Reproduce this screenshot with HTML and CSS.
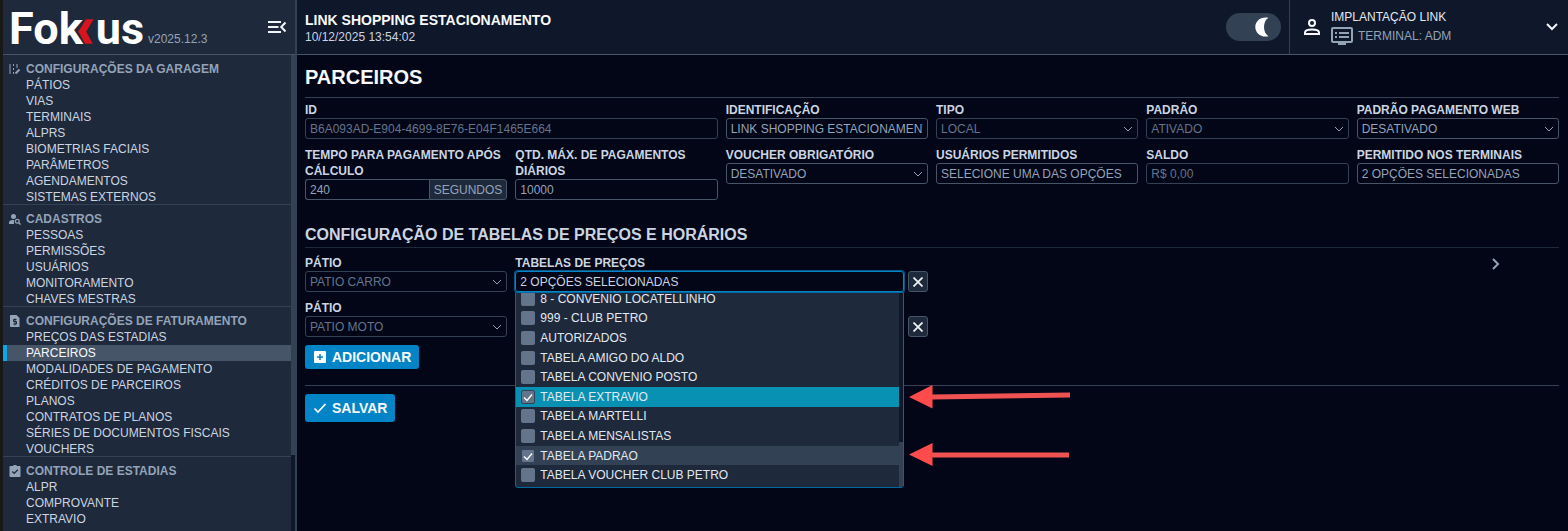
FILE: index.html
```html
<!DOCTYPE html>
<html lang="pt-BR">

<head>
    <meta charset="UTF-8">
    <meta name="viewport" content="width=device-width, initial-scale=1.0">
    <title>Fokkus - Parceiros</title>
    <link rel="stylesheet" href="styles.css">
</head>

<body>
    <aside class="sidebar">
        <div class="brand">
            <a class="logo" href="#" aria-label="Fokkus"><span>Fok</span><svg width="17" height="25" viewBox="0 0 17 25"><path d="M9 0H17L9.500 12.500L16 25H8L1 12.500Z" fill="#d9141e" stroke="#1e293b" stroke-width=".5"/></svg><span>us</span></a>
            <span class="version">v2025.12.3</span>
            <button class="icon-btn collapse" aria-label="Recolher menu">
                <svg width="20" height="14" viewBox="0 0 20 14" fill="none" stroke="#f1f5f9" stroke-width="2"><path d="M1 2H14M1 7H11.500M1 12H14M18.500 2.500L14.200 7L18.500 11.500"/></svg>
            </button>
        </div>
        <div class="menu-wrap">
            <nav class="menu">
                <section class="group">
                    <h3>
                        <svg width="12" height="12" viewBox="0 0 12 12" fill="none" stroke="#94a3b8"><path d="M1 1V11M4.500 1V3M4.500 5V7M4.500 9V11M8 1V5"/><path d="M6.500 10.500L10.500 6.500" stroke-width="2"/></svg>
                        CONFIGURAÇÕES DA GARAGEM
                    </h3>
                    <ul>
                        <li><a href="#">PÁTIOS</a></li>
                        <li><a href="#">VIAS</a></li>
                        <li><a href="#">TERMINAIS</a></li>
                        <li><a href="#">ALPRS</a></li>
                        <li><a href="#">BIOMETRIAS FACIAIS</a></li>
                        <li><a href="#">PARÂMETROS</a></li>
                        <li><a href="#">AGENDAMENTOS</a></li>
                        <li><a href="#">SISTEMAS EXTERNOS</a></li>
                    </ul>
                </section>
                <section class="group">
                    <h3>
                        <svg width="12" height="12" viewBox="0 0 12 12" fill="#94a3b8"><circle cx="4.500" cy="3.500" r="2.500"/><path d="M0 11V9.500C0 7.500 2.500 7 5 7V11Z"/><circle cx="8.300" cy="8.200" r="1.900" fill="none" stroke="#94a3b8" stroke-width="1.200"/><path d="M9.600 9.600L11.600 11.600" stroke="#94a3b8" stroke-width="1.300"/></svg>
                        CADASTROS
                    </h3>
                    <ul>
                        <li><a href="#">PESSOAS</a></li>
                        <li><a href="#">PERMISSÕES</a></li>
                        <li><a href="#">USUÁRIOS</a></li>
                        <li><a href="#">MONITORAMENTO</a></li>
                        <li><a href="#">CHAVES MESTRAS</a></li>
                    </ul>
                </section>
                <section class="group">
                    <h3>
                        <svg width="12" height="12" viewBox="0 0 12 12"><path d="M2 0H7.500L10.500 3V12H2C1.400 12 1 11.600 1 11V1C1 .4 1.400 0 2 0Z" fill="#94a3b8"/><path d="M7.500 4.500H4.500V6.500H7.500V9H4.300M6 3.500V10.300" fill="none" stroke="#1e293b"/></svg>
                        CONFIGURAÇÕES DE FATURAMENTO
                    </h3>
                    <ul>
                        <li><a href="#">PREÇOS DAS ESTADIAS</a></li>
                        <li><a class="active" href="#">PARCEIROS</a></li>
                        <li><a href="#">MODALIDADES DE PAGAMENTO</a></li>
                        <li><a href="#">CRÉDITOS DE PARCEIROS</a></li>
                        <li><a href="#">PLANOS</a></li>
                        <li><a href="#">CONTRATOS DE PLANOS</a></li>
                        <li><a href="#">SÉRIES DE DOCUMENTOS FISCAIS</a></li>
                        <li><a href="#">VOUCHERS</a></li>
                    </ul>
                </section>
                <section class="group">
                    <h3>
                        <svg width="12" height="12" viewBox="0 0 12 12"><path d="M1.500 1H4C4.300-.2 7.700-.2 8 1H10.500C11 1 11.500 1.400 11.500 2V11C11.500 11.600 11 12 10.500 12H1.500C1 12 .5 11.600 .5 11V2C.5 1.400 1 1 1.500 1Z" fill="#94a3b8"/><path d="M3.300 6.500L5.200 8.400L8.800 4.800" fill="none" stroke="#1e293b" stroke-width="1.300"/></svg>
                        CONTROLE DE ESTADIAS
                    </h3>
                    <ul>
                        <li><a href="#">ALPR</a></li>
                        <li><a href="#">COMPROVANTE</a></li>
                        <li><a href="#">EXTRAVIO</a></li>
                    </ul>
                </section>
            </nav>
            <div class="scroll"><div class="scroll-thumb"></div></div>
        </div>
    </aside>

    <div class="page">
        <header class="topbar">
            <div class="place">
                <strong>LINK SHOPPING ESTACIONAMENTO</strong>
                <time>10/12/2025 13:54:02</time>
            </div>
            <label class="theme">
                <input type="checkbox" checked aria-label="Tema escuro">
                <svg width="14" height="20" viewBox="0 0 14 20"><path d="M13.500 .8C7.500 4 7.500 16 13.500 19.200C6.500 21 .3 16.500 .3 10C.3 3.500 6.500-1 13.500 .8Z" fill="#fff"/></svg>
            </label>
            <button class="user">
                <svg width="18" height="18" viewBox="0 0 18 18" fill="none" stroke="#f8fafc" stroke-width="2"><circle cx="9" cy="5" r="3"/><path d="M2 16V14.500C2 12.300 6 11.500 9 11.500S16 12.300 16 14.500V16Z"/></svg>
                <span class="user-info">
                    <span>IMPLANTAÇÃO LINK</span>
                    <span class="terminal">
                        <svg width="22" height="18" viewBox="0 0 22 18" fill="none" stroke="#94a3b8" stroke-width="2"><rect x="1" y="1" width="20" height="14" rx="1"/><path d="M7 17H15M8 6H18M8 10H18M4 6H6M4 10H6"/></svg>
                        TERMINAL: ADM
                    </span>
                </span>
                <svg width="12" height="8" viewBox="0 0 12 8" fill="none" stroke="#f1f5f9" stroke-width="2"><path d="M1 1L6 6L11 1"/></svg>
            </button>
        </header>

        <main class="content">
            <h1>PARCEIROS</h1>
            <form>
                <div class="grid">
                    <div class="field wide">
                        <label for="id">ID</label>
                        <input id="id" type="text" value="B6A093AD-E904-4699-8E76-E04F1465E664" disabled>
                    </div>
                    <div class="field">
                        <label for="ident">IDENTIFICAÇÃO</label>
                        <input id="ident" type="text" value="LINK SHOPPING ESTACIONAMENTO">
                    </div>
                    <div class="field">
                        <label for="tipo">TIPO</label>
                        <select id="tipo" disabled><option>LOCAL</option></select>
                    </div>
                    <div class="field">
                        <label for="padrao">PADRÃO</label>
                        <select id="padrao" disabled><option>ATIVADO</option></select>
                    </div>
                    <div class="field">
                        <label for="web">PADRÃO PAGAMENTO WEB</label>
                        <select id="web"><option>DESATIVADO</option></select>
                    </div>
                    <div class="field">
                        <label for="tempo">TEMPO PARA PAGAMENTO APÓS CÁLCULO</label>
                        <div class="addon">
                            <input id="tempo" type="text" value="240">
                            <span>SEGUNDOS</span>
                        </div>
                    </div>
                    <div class="field">
                        <label for="qtd">QTD. MÁX. DE PAGAMENTOS DIÁRIOS</label>
                        <input id="qtd" type="text" value="10000">
                    </div>
                    <div class="field">
                        <label for="voucher">VOUCHER OBRIGATÓRIO</label>
                        <select id="voucher"><option>DESATIVADO</option></select>
                    </div>
                    <div class="field">
                        <label for="usuarios">USUÁRIOS PERMITIDOS</label>
                        <input id="usuarios" type="text" value="SELECIONE UMA DAS OPÇÕES" readonly>
                    </div>
                    <div class="field">
                        <label for="saldo">SALDO</label>
                        <input id="saldo" type="text" value="R$ 0,00" disabled>
                    </div>
                    <div class="field">
                        <label for="terminais">PERMITIDO NOS TERMINAIS</label>
                        <input id="terminais" type="text" value="2 OPÇÕES SELECIONADAS" readonly>
                    </div>
                </div>

                <h2>CONFIGURAÇÃO DE TABELAS DE PREÇOS E HORÁRIOS</h2>
                <div class="grid">
                    <div class="field">
                        <label for="patio1">PÁTIO</label>
                        <select id="patio1" disabled><option>PATIO CARRO</option></select>
                    </div>
                    <div class="field wide">
                        <label for="tabelas1">TABELAS DE PREÇOS</label>
                        <div class="row">
                            <div class="multi">
                                <input id="tabelas1" class="open" type="text" value="2 OPÇÕES SELECIONADAS" readonly>
                                <div class="dropdown">
                                    <div class="options">
                                        <label><input type="checkbox">8 - CONVENIO LOCATELLINHO</label>
                                        <label><input type="checkbox">999 - CLUB PETRO</label>
                                        <label><input type="checkbox">AUTORIZADOS</label>
                                        <label><input type="checkbox">TABELA AMIGO DO ALDO</label>
                                        <label><input type="checkbox">TABELA CONVENIO POSTO</label>
                                        <label class="focused"><input type="checkbox" checked>TABELA EXTRAVIO</label>
                                        <label><input type="checkbox">TABELA MARTELLI</label>
                                        <label><input type="checkbox">TABELA MENSALISTAS</label>
                                        <label class="selected"><input type="checkbox" checked>TABELA PADRAO</label>
                                        <label><input type="checkbox">TABELA VOUCHER CLUB PETRO</label>
                                    </div>
                                    <div class="scroll end"><div class="scroll-thumb"></div></div>
                                </div>
                            </div>
                            <button type="button" class="remove" aria-label="Remover">
                                <svg width="10" height="10" viewBox="0 0 10 10" stroke="#f1f5f9" stroke-width="1.700"><path d="M.5 .5L9.500 9.500M9.500 .5L.5 9.500"/></svg>
                            </button>
                        </div>
                    </div>
                    <button type="button" class="icon-btn expand" aria-label="Expandir">
                        <svg width="8" height="12" viewBox="0 0 8 12" fill="none" stroke="#94a3b8" stroke-width="2"><path d="M1 1L6 6L1 11"/></svg>
                    </button>
                    <div class="field first">
                        <label for="patio2">PÁTIO</label>
                        <select id="patio2" disabled><option>PATIO MOTO</option></select>
                    </div>
                    <div class="field wide bottom">
                        <div class="row">
                            <div class="multi"><input type="text" aria-label="Tabelas de preços" readonly></div>
                            <button type="button" class="remove" aria-label="Remover">
                                <svg width="10" height="10" viewBox="0 0 10 10" stroke="#f1f5f9" stroke-width="1.700"><path d="M.5 .5L9.500 9.500M9.500 .5L.5 9.500"/></svg>
                            </button>
                        </div>
                    </div>
                </div>
                <button type="button" class="btn">
                    <svg width="14" height="14" viewBox="0 0 14 14"><rect x="1" y="1" width="12" height="12" rx="1" fill="#fff"/><path d="M7 4V10M4 7H10" stroke="#0284c7" stroke-width="1.500"/></svg>
                    ADICIONAR
                </button>
                <div class="actions">
                    <button type="submit" class="btn big">
                        <svg width="14" height="14" viewBox="0 0 14 14" fill="none" stroke="#fff" stroke-width="1.700"><path d="M1.500 7.500L5 11L12.500 3"/></svg>
                        SALVAR
                    </button>
                </div>
            </form>
        </main>
    </div>

    <svg class="arrows" width="162" height="84" viewBox="0 0 162 84">
        <path d="M23 9.500L161 7.500V12.500L23 14.500Z" fill="#f05252"/>
        <path d="M0 12L23.500 0V23.500Z" fill="#ff4b4b"/>
        <path d="M23 67.500H160V72.500H23Z" fill="#f05252"/>
        <path d="M0 69.500L23.500 58V81Z" fill="#ff4b4b"/>
    </svg>
</body>

</html>
```

FILE: styles.css
```css
* {
    box-sizing: border-box;
}

body {
    display: flex;
    height: 100vh;
    margin: 0;
    overflow: hidden;
    border-left: 3px solid #181818;
    background: #020617;
    color: #cbd5e1;
    font: 12px/16px "Liberation Sans", Arial, sans-serif;
}

h1, h2, h3, ul {
    margin: 0;
    padding: 0;
}

svg {
    flex: none;
    display: block;
}

a {
    color: inherit;
    text-decoration: none;
}

button, input, select {
    margin: 0;
    color: inherit;
    font: inherit;
}

button {
    cursor: pointer;
}

.icon-btn {
    padding: 0;
    border: 0;
    background: none;
}

/* menu lateral */
.sidebar {
    display: flex;
    flex: none;
    flex-direction: column;
    width: 294px;
    border-right: 2px solid #334155;
    background: #1e293b;
}

.brand {
    display: flex;
    flex: none;
    align-items: flex-end;
    height: 55px;
    padding: 0 8px 7px 6px;
    border-bottom: 1px solid #475569;
}

.logo {
    display: flex;
    align-items: flex-end;
    margin-bottom: 2px;
    color: #fff;
    font: 700 45px/32px Roboto, sans-serif;
}

.logo svg {
    margin: 0 2px 1px -6px;
}

.version {
    margin-left: 4px;
    color: #94a3b8;
}

.collapse {
    margin: 0 0 13px auto;
}

.menu-wrap {
    display: flex;
    flex: 1;
    min-height: 0;
}

.menu {
    flex: 1;
    overflow: hidden;
}

.group {
    padding-top: 6px;
    border-bottom: 1px solid #334155;
}

.group:last-child {
    border-bottom: 0;
}

.group h3 {
    display: flex;
    align-items: center;
    gap: 5px;
    padding-left: 6px;
    color: #94a3b8;
    font-size: 12px;
}

.group ul {
    margin-bottom: -1px;
    list-style: none;
}

.group a {
    display: block;
    padding-left: 19px;
    border-left: 4px solid transparent;
}

.group .active {
    border-color: #0ea5e9;
    background: #475569;
    color: #f8fafc;
}

.scroll {
    display: flex;
    flex: none;
    flex-direction: column;
    width: 4px;
    background: #0f172a;
}

.scroll-thumb {
    height: 84%;
    background: #334155;
}

.scroll.end {
    justify-content: flex-end;
}

.scroll.end .scroll-thumb {
    height: 23%;
}

/* topo */
.page {
    flex: 1;
    min-width: 0;
}

.topbar {
    display: flex;
    align-items: center;
    height: 55px;
    padding-left: 8px;
    border-bottom: 1px solid #475569;
    background: #0f172a;
}

.place {
    display: flex;
    flex: 1;
    flex-direction: column;
    gap: 1px;
    padding-top: 2px;
}

.place strong {
    color: #f8fafc;
    font-size: 14px;
}

.theme {
    display: flex;
    align-items: center;
    justify-content: flex-end;
    width: 55px;
    height: 28px;
    margin-right: 8px;
    padding-right: 12px;
    border-radius: 14px;
    background: #334155;
}

.theme input {
    position: absolute;
    opacity: 0;
}

.user {
    display: flex;
    align-items: center;
    gap: 10px;
    width: 279px;
    height: 100%;
    padding: 0 10px 0 13px;
    border: 0;
    border-left: 1px solid #334155;
    background: none;
    color: #e2e8f0;
    text-align: left;
}

.user-info {
    display: flex;
    flex: 1;
    flex-direction: column;
    gap: 2px;
}

.terminal {
    display: flex;
    align-items: center;
    gap: 5px;
    color: #94a3b8;
}

/* formulario */
.content {
    padding: 8px 9px 0 8px;
}

h1 {
    margin-bottom: 4px;
    padding-bottom: 6px;
    border-bottom: 1px solid #334155;
    color: #f8fafc;
    font-size: 20px;
    line-height: 28px;
}

h2 {
    margin: 24px 0 7px;
    padding-bottom: 1px;
    border-bottom: 1px solid #1e293b;
    font-size: 16px;
    line-height: 22px;
}

.grid {
    display: grid;
    grid-template-columns: repeat(6, minmax(0, 1fr));
    gap: 8px;
    align-items: start;
}

.wide {
    grid-column: span 2;
}

.first {
    grid-column-start: 1;
}

.bottom {
    align-self: end;
}

.field > label {
    display: block;
    font-weight: bold;
}

.field input[type="text"],
.field select {
    display: block;
    width: 100%;
    height: 21px;
    padding: 0 4px;
    border: 1px solid #475569;
    border-radius: 3px;
    outline: 0;
    background: transparent;
    color: #94a3b8;
}

.field select {
    appearance: none;
    background: url("data:image/svg+xml,%3Csvg xmlns='http://www.w3.org/2000/svg' width='10' height='6' fill='none' stroke='%2394a3b8'%3E%3Cpath d='M1 1l4 4 4-4'/%3E%3C/svg%3E") no-repeat right 4px center;
}

.field input:disabled,
.field select:disabled {
    border-color: #334155;
    color: #64748b;
    opacity: 1;
}

.addon {
    display: flex;
}

.field .addon input {
    flex: 1;
    min-width: 0;
    border-right: 0;
    border-radius: 3px 0 0 3px;
}

.addon span {
    padding: 2px 4px 1px;
    border: 1px solid #475569;
    border-radius: 0 3px 3px 0;
    background: #1e293b;
    color: #94a3b8;
}

.row {
    display: flex;
    gap: 4px;
}

.multi {
    position: relative;
    flex: 1;
}

.multi .open[type="text"] {
    border-color: #0284c7;
    box-shadow: 0 0 0 1px #075985;
    color: #cbd5e1;
}

.dropdown {
    position: absolute;
    z-index: 1;
    top: 100%;
    right: 0;
    left: 0;
    display: flex;
    height: 196px;
    overflow: hidden;
    border: 1px solid #0369a1;
    border-radius: 0 0 3px 3px;
    background: #1e293b;
}

/* rolado ate o fim */
.options {
    display: grid;
    flex: 1;
    grid-auto-rows: 1fr;
    align-self: flex-end;
    height: 196px;
    margin-bottom: 2px;
}

.options label {
    display: flex;
    align-items: center;
    gap: 5px;
    padding-left: 5px;
    color: #e2e8f0;
}

.options .focused {
    background: #0891b2;
}

.options .selected {
    background: #334155;
}

.options input {
    appearance: none;
    width: 14px;
    height: 14px;
    border-radius: 2px;
    background: #64748b;
}

.options input:checked {
    border: 1px solid #334155;
    background: #64748b url("data:image/svg+xml,%3Csvg xmlns='http://www.w3.org/2000/svg' width='10' height='10' fill='none' stroke='white' stroke-width='1.400'%3E%3Cpath d='M1 5.500l3 3 5-6'/%3E%3C/svg%3E") no-repeat center;
}

.remove {
    display: flex;
    align-items: center;
    justify-content: center;
    width: 20px;
    height: 21px;
    padding: 0;
    border: 1px solid #475569;
    border-radius: 3px;
    background: #1e293b;
}

.expand {
    grid-column: 6;
    justify-self: center;
    margin: 3px 0 0 76px;
}

.btn {
    display: flex;
    align-items: center;
    gap: 5px;
    height: 24px;
    margin-top: 8px;
    padding: 0 8px;
    border: 0;
    border-radius: 3px;
    background: #0284c7;
    color: #f8fafc;
    font-size: 14px;
    font-weight: bold;
}

.btn.big {
    height: 28px;
}

.actions {
    margin-top: 16px;
    border-top: 1px solid #334155;
}

/* setas de destaque */
.arrows {
    position: absolute;
    z-index: 2;
    top: 385px;
    left: 909px;
}
```
